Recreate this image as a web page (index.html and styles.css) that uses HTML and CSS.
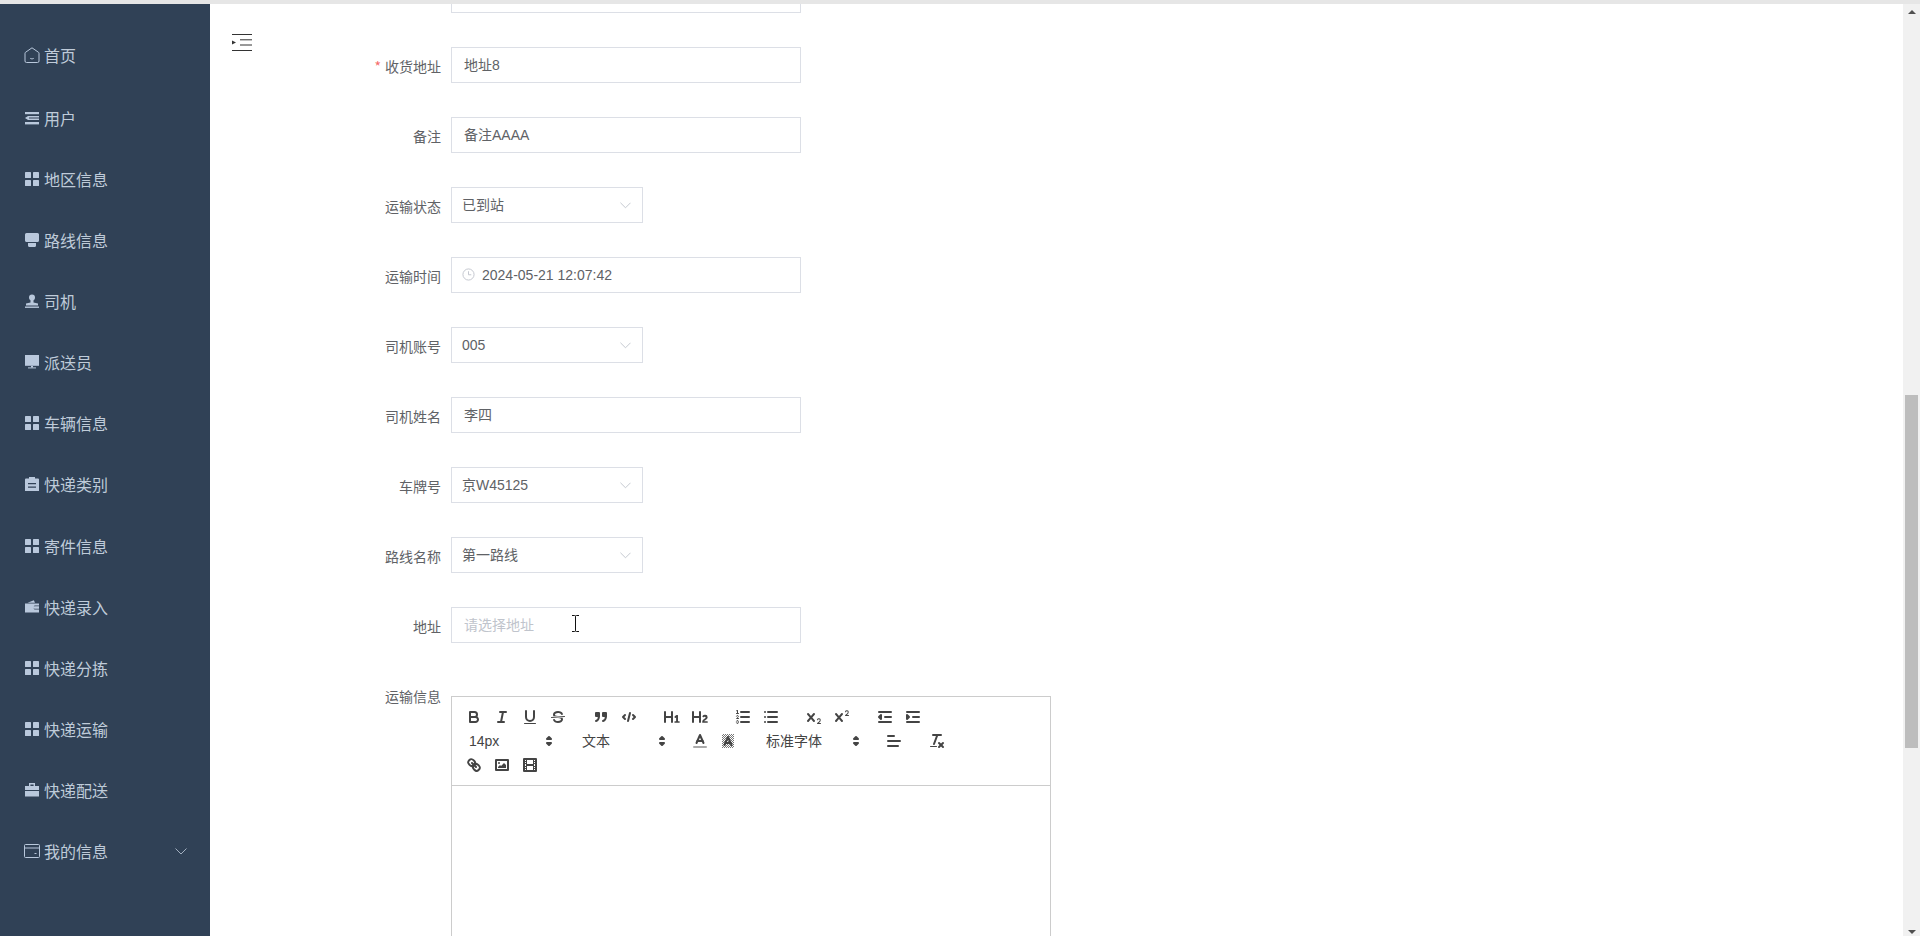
FILE: index.html
```html
<!DOCTYPE html>
<html lang="zh-CN">

<head>
    <meta charset="UTF-8">
    <meta name="viewport" content="width=device-width, initial-scale=1.0">
    <title>快递运输</title>

    <link rel="stylesheet" href="styles.css">

</head>

<body>
    <svg class="defs" width="0" height="0">
        <symbol id="i-menu" viewBox="0 0 14 14">
            <rect x="0" y="0" width="6" height="6" rx="0.6" />
            <rect x="8" y="0" width="6" height="6" rx="0.6" />
            <rect x="0" y="8" width="6" height="6" rx="0.6" />
            <rect x="8" y="8" width="6" height="6" rx="0.6" />
        </symbol>
        <symbol id="i-chevron" viewBox="0 0 12 7">
            <polyline points="0.5 0.5 6 6 11.5 0.5" />
        </symbol>
        <symbol id="i-updown" viewBox="0 0 18 18">
            <polygon class="st" points="7 11 9 13 11 11 7 11" />
            <polygon class="st" points="7 7 9 5 11 7 7 7" />
        </symbol>
    </svg>

    <div class="top-strip"></div>

    <div class="layout">
        <!-- Sidebar -->
        <nav class="sidebar">
            <a class="nav-item nav-home">
                <svg class="nav-icon outline" viewBox="0 0 16 16"><path d="M8 .8 14.6 5.4c.3.2.4.5.4.8V14a1.5 1.5 0 0 1-1.500 1.500h-11A1.500 1.500 0 0 1 1 14V6.200c0-.3.1-.6.4-.8L8 .8Z" /><path d="M6.300 11.400c1 .6 2.400.6 3.400 0" /></svg>
                <span>首页</span>
            </a>
            <a class="nav-item">
                <svg class="nav-icon" viewBox="0 0 14 14"><rect x="0" y="1" width="14" height="2.200" /><path d="M0 7 3 5H14V6.600H4V7.600H14V9H3Z" /><rect x="0" y="11" width="14" height="2.400" /></svg>
                <span>用户</span>
            </a>
            <a class="nav-item">
                <svg class="nav-icon"><use href="#i-menu" /></svg>
                <span>地区信息</span>
            </a>
            <a class="nav-item">
                <svg class="nav-icon" viewBox="0 0 14 14"><path d="M1.500 0H12.500A1.500 1.500 0 0 1 14 1.500V7.500C14 8.500 13 9 12 9H2C1 9 0 8.500 0 7.500V1.500A1.500 1.500 0 0 1 1.500 0Z" /><path d="M3 10H11V12.500C11 13.300 10.500 14 9.500 14H4.500C3.500 14 3 13.300 3 12.500Z" /></svg>
                <span>路线信息</span>
            </a>
            <a class="nav-item">
                <svg class="nav-icon" viewBox="0 0 14 14"><circle cx="7" cy="3.400" r="3" /><path d="M5.500 6H8.500V8.500L13 9.500V11.500H1V9.500L5.500 8.500Z" /><rect x="0" y="12.500" width="14" height="1.400" /></svg>
                <span>司机</span>
            </a>
            <a class="nav-item">
                <svg class="nav-icon" viewBox="0 0 14 14"><rect x="0" y="0" width="14" height="10.800" /><path d="M3 12.400H11V13.400H3Z" /><rect x="6" y="11" width="2" height="1.500" /></svg>
                <span>派送员</span>
            </a>
            <a class="nav-item">
                <svg class="nav-icon"><use href="#i-menu" /></svg>
                <span>车辆信息</span>
            </a>
            <a class="nav-item">
                <svg class="nav-icon" viewBox="0 0 14 14"><path fill-rule="evenodd" d="M4 0H10V1.500H13A1 1 0 0 1 14 2.500V14H0V2.500A1 1 0 0 1 1 1.500H4ZM3 6V7.300H11V6ZM3 9.500V10.800H11V9.500Z" /></svg>
                <span>快递类别</span>
            </a>
            <a class="nav-item">
                <svg class="nav-icon"><use href="#i-menu" /></svg>
                <span>寄件信息</span>
            </a>
            <a class="nav-item">
                <svg class="nav-icon" viewBox="0 0 14 14"><path d="M2.500 2.800 8.800.3 10 2.800Z" /><path fill-rule="evenodd" d="M0 3.500H14V5.500H9.500A2.500 2.500 0 0 0 9.500 9.500H14V12.500H0ZM9.700 6.300H14V8.700H9.700A1.200 1.200 0 0 1 9.700 6.300Z" /></svg>
                <span>快递录入</span>
            </a>
            <a class="nav-item">
                <svg class="nav-icon"><use href="#i-menu" /></svg>
                <span>快递分拣</span>
            </a>
            <a class="nav-item">
                <svg class="nav-icon"><use href="#i-menu" /></svg>
                <span>快递运输</span>
            </a>
            <a class="nav-item">
                <svg class="nav-icon" viewBox="0 0 14 14"><path fill-rule="evenodd" d="M4 0H10V3H14V7H0V3H4ZM5.400 1.400V3H8.600V1.400Z" /><rect x="0" y="8" width="14" height="5.500" /></svg>
                <span>快递配送</span>
            </a>
            <a class="nav-item">
                <svg class="nav-icon outline" viewBox="0 0 16 16"><rect x="0.500" y="1.500" width="15" height="13" rx="1" /><path d="M.5 5H15.500" /><path d="M10.500 10.500H12.500" /></svg>
                <span>我的信息</span>
                <svg class="nav-arrow"><use href="#i-chevron" /></svg>
            </a>
        </nav>

        <!-- Main -->
        <main class="content">
            <svg class="toggle" viewBox="0 0 20 17"><path d="M0 .5H20M8 5.800H20M8 11H20M0 16.500H20" /><polygon points="0 6.500 4 8.500 0 10.500" /></svg>

            <form class="form">
                <div class="form-row">
                    <label class="form-label"></label>
                    <input class="text-input" type="text" readonly>
                </div>
                <div class="form-row">
                    <label class="form-label"><i class="req">*</i>收货地址</label>
                    <input class="text-input" type="text" value="地址8" readonly>
                </div>
                <div class="form-row">
                    <label class="form-label">备注</label>
                    <input class="text-input" type="text" value="备注AAAA" readonly>
                </div>
                <div class="form-row">
                    <label class="form-label">运输状态</label>
                    <div class="select">已到站<svg class="select-arrow"><use href="#i-chevron" /></svg></div>
                </div>
                <div class="form-row">
                    <label class="form-label">运输时间</label>
                    <div class="date-box">
                        <svg class="date-icon" viewBox="0 0 14 14"><circle cx="7" cy="7" r="6" /><path d="M7 3.500V7.300H10" /></svg>
                        <input class="text-input date-input" type="text" value="2024-05-21 12:07:42" readonly>
                    </div>
                </div>
                <div class="form-row">
                    <label class="form-label">司机账号</label>
                    <div class="select">005<svg class="select-arrow"><use href="#i-chevron" /></svg></div>
                </div>
                <div class="form-row">
                    <label class="form-label">司机姓名</label>
                    <input class="text-input" type="text" value="李四" readonly>
                </div>
                <div class="form-row">
                    <label class="form-label">车牌号</label>
                    <div class="select">京W45125<svg class="select-arrow"><use href="#i-chevron" /></svg></div>
                </div>
                <div class="form-row">
                    <label class="form-label">路线名称</label>
                    <div class="select">第一路线<svg class="select-arrow"><use href="#i-chevron" /></svg></div>
                </div>
                <div class="form-row">
                    <label class="form-label">地址</label>
                    <input class="text-input addr-input" type="text" placeholder="请选择地址">
                </div>

                <!-- Rich text editor -->
                <div class="form-row editor-row">
                    <label class="form-label editor-label">运输信息</label>
                    <div class="editor">
                        <div class="toolbar">
                            <div class="tb-row">
                                <span class="tb-group">
                                    <svg class="tb-btn" viewBox="0 0 18 18"><path class="st" d="M5,4H9.500A2.500,2.500,0,0,1,12,6.500v0A2.500,2.500,0,0,1,9.500,9H5A0,0,0,0,1,5,9V4A0,0,0,0,1,5,4Z" /><path class="st" d="M5,9h5.500A2.500,2.500,0,0,1,13,11.500v0A2.500,2.500,0,0,1,10.500,14H5a0,0,0,0,1,0,0V9A0,0,0,0,1,5,9Z" /></svg>
                                    <svg class="tb-btn" viewBox="0 0 18 18"><line class="st" x1="7" x2="13" y1="4" y2="4" /><line class="st" x1="5" x2="11" y1="14" y2="14" /><line class="st" x1="8" x2="10" y1="14" y2="4" /></svg>
                                    <svg class="tb-btn" viewBox="0 0 18 18"><path class="st" d="M5,3V9a4.012,4.012,0,0,0,4,4H9a4.012,4.012,0,0,0,4-4V3" /><rect class="fl" height="1" rx="0.500" ry="0.500" width="12" x="3" y="15" /></svg>
                                    <svg class="tb-btn" viewBox="0 0 18 18"><line class="st th" x1="15.500" x2="2.500" y1="8.500" y2="9.500" /><path class="fl" d="M9.007,8C6.542,7.791,6,7.519,6,6.500,6,5.792,7.283,5,9,5c1.571,0,2.765.679,2.969,1.309a1,1,0,0,0,1.900-.617C13.356,4.106,11.354,3,9,3,6.200,3,4,4.538,4,6.500a3.200,3.200,0,0,0,.5,1.843Z" /><path class="fl" d="M8.984,10C11.457,10.208,12,10.479,12,11.500c0,.708-1.283,1.500-3,1.500-1.571,0-2.765-.679-2.969-1.309a1,1,0,1,0-1.900.617C4.644,13.894,6.646,15,9,15c2.800,0,5-1.538,5-3.500a3.200,3.200,0,0,0-.5-1.843Z" /></svg>
                                </span>
                                <span class="tb-group">
                                    <svg class="tb-btn" viewBox="0 0 18 18"><rect class="st fl" height="3" width="3" x="4" y="5" /><rect class="st fl" height="3" width="3" x="11" y="5" /><path class="st" d="M7,8c0,4.031-3,5-3,5" /><path class="st" d="M14,8c0,4.031-3,5-3,5" /></svg>
                                    <svg class="tb-btn" viewBox="0 0 18 18"><polyline class="st" points="5 7 3 9 5 11" /><polyline class="st" points="13 7 15 9 13 11" /><line class="st" x1="10" x2="8" y1="5" y2="13" /></svg>
                                </span>
                                <span class="tb-group">
                                    <svg class="tb-btn" viewBox="0 0 18 18"><path class="fl" d="M10,4V14a1,1,0,0,1-2,0V10H3v4a1,1,0,0,1-2,0V4A1,1,0,0,1,3,4V8H8V4a1,1,0,0,1,2,0Zm6.068,9.209H14.990V7.599a.541.541,0,0,0-.605-.605h-.627a1.011,1.011,0,0,0-.748.297L11.645,8.566a.544.544,0,0,0-.022.858l.286.308a.539.539,0,0,0,.847.033l.099-.088a1.214,1.214,0,0,0,.242-.353h.022s-.011.309-.011.606V13.209H12.041a.541.541,0,0,0-.605.605v.44a.541.541,0,0,0,.605.605h4.027a.541.541,0,0,0,.605-.605v-.44A.541.541,0,0,0,16.068,13.209Z" /></svg>
                                    <svg class="tb-btn" viewBox="0 0 18 18"><path class="fl" d="M16.740,13.814v.44a.541.541,0,0,1-.605.605H11.855a.584.584,0,0,1-.649-.605v-.241c0-2.905,3.399-3.422,3.399-4.555a.777.777,0,0,0-.847-.781,1.177,1.177,0,0,0-.836.385c-.275.264-.561.374-.858.132l-.429-.341c-.308-.242-.385-.518-.154-.814a2.972,2.972,0,0,1,2.454-1.177,2.454,2.454,0,0,1,2.684,2.409c0,2.453-3.179,2.927-3.278,3.938h2.794A.541.541,0,0,1,16.740,13.814ZM9,3A1,1,0,0,0,8,4V8H3V4A1,1,0,0,0,1,4V14a1,1,0,0,0,2,0V10H8v4a1,1,0,0,0,2,0V4A1,1,0,0,0,9,3Z" /></svg>
                                </span>
                                <span class="tb-group">
                                    <svg class="tb-btn" viewBox="0 0 18 18"><line class="st" x1="7" x2="15" y1="4" y2="4" /><line class="st" x1="7" x2="15" y1="9" y2="9" /><line class="st" x1="7" x2="15" y1="14" y2="14" /><line class="st th" x1="2.500" x2="4.500" y1="5.500" y2="5.500" /><path class="fl" d="M3.500,6A.5.5,0,0,1,3,5.500V3.085l-.276.138A.5.5,0,0,1,2.053,3c-.124-.247-.023-.324.224-.447l1-.5A.5.5,0,0,1,4,2.500v3A.5.5,0,0,1,3.500,6Z" /><path class="st th" d="M4.500,10.500h-2c0-.234,1.850-1.076,1.850-2.234A.959.959,0,0,0,2.500,8.156" /><path class="st th" d="M2.500,14.846a.959.959,0,0,0,1.850-.109A.7.7,0,0,0,3.750,14a.688.688,0,0,0,.6-.736.959.959,0,0,0-1.850-.109" /></svg>
                                    <svg class="tb-btn" viewBox="0 0 18 18"><line class="st" x1="6" x2="15" y1="4" y2="4" /><line class="st" x1="6" x2="15" y1="9" y2="9" /><line class="st" x1="6" x2="15" y1="14" y2="14" /><line class="st" x1="3" x2="3" y1="4" y2="4" /><line class="st" x1="3" x2="3" y1="9" y2="9" /><line class="st" x1="3" x2="3" y1="14" y2="14" /></svg>
                                </span>
                                <span class="tb-group">
                                    <svg class="tb-btn" viewBox="0 0 18 18"><path class="fl" d="M15.500,15H13.861a3.858,3.858,0,0,0,1.914-2.975,1.800,1.800,0,0,0-1.600-1.751A1.921,1.921,0,0,0,12.021,11.700a.5.5,0,1,0,.957.291.914.914,0,0,1,1.053-.725.81.81,0,0,1,.744.762c0,1.076-1.170,1.870-1.940,2.431A1.456,1.456,0,0,0,12,15.500a.5.5,0,0,0,.5.5h3A.5.5,0,0,0,15.500,15Z" /><path class="fl" d="M9.650,5.241a1,1,0,0,0-1.409.108L6,7.964,3.759,5.349A1,1,0,0,0,2.241,6.651L4.684,9.500,2.241,12.350a1,1,0,0,0,1.518,1.301L6,11.036l2.241,2.615a1,1,0,0,0,1.518-1.301L7.316,9.500,9.759,6.651A1,1,0,0,0,9.650,5.241Z" /></svg>
                                    <svg class="tb-btn" viewBox="0 0 18 18"><path class="fl" d="M15.500,7H13.861a4.015,4.015,0,0,0,1.914-2.975,1.800,1.800,0,0,0-1.600-1.751A1.922,1.922,0,0,0,12.021,3.700a.5.5,0,1,0,.957.291.917.917,0,0,1,1.053-.725.81.81,0,0,1,.744.762c0,1.077-1.164,1.925-1.934,2.486A1.423,1.423,0,0,0,12,7.500a.5.5,0,0,0,.5.5h3A.5.5,0,0,0,15.500,7Z" /><path class="fl" d="M9.650,5.241a1,1,0,0,0-1.409.108L6,7.964,3.759,5.349A1,1,0,0,0,2.241,6.651L4.684,9.500,2.241,12.350a1,1,0,0,0,1.518,1.301L6,11.036l2.241,2.615a1,1,0,0,0,1.518-1.301L7.316,9.500,9.759,6.651A1,1,0,0,0,9.650,5.241Z" /></svg>
                                </span>
                                <span class="tb-group">
                                    <svg class="tb-btn" viewBox="0 0 18 18"><line class="st" x1="3" x2="15" y1="14" y2="14" /><line class="st" x1="3" x2="15" y1="4" y2="4" /><line class="st" x1="9" x2="15" y1="9" y2="9" /><polyline class="st fl th2" points="5 7 5 11 3 9 5 7" /></svg>
                                    <svg class="tb-btn" viewBox="0 0 18 18"><line class="st" x1="3" x2="15" y1="14" y2="14" /><line class="st" x1="3" x2="15" y1="4" y2="4" /><line class="st" x1="9" x2="15" y1="9" y2="9" /><polyline class="st fl th2" points="3 7 3 11 5 9 3 7" /></svg>
                                </span>
                            </div>
                            <div class="tb-row">
                                <span class="tb-group">
                                    <span class="picker picker-98">14px<svg class="picker-arrow"><use href="#i-updown" /></svg></span>
                                </span>
                                <span class="tb-group">
                                    <span class="picker picker-98">文本<svg class="picker-arrow"><use href="#i-updown" /></svg></span>
                                </span>
                                <span class="tb-group">
                                    <svg class="tb-btn" viewBox="0 0 18 18"><line class="st lbl" x1="3" x2="15" y1="15" y2="15" /><polyline class="st" points="5.500 11 9 3 12.500 11" /><line class="st" x1="11.630" x2="6.380" y1="9" y2="9" /></svg>
                                    <svg class="tb-btn" viewBox="0 0 18 18"><defs><pattern id="checks" width="2" height="2" patternUnits="userSpaceOnUse"><rect width="1" height="1" fill="#777" /><rect x="1" y="1" width="1" height="1" fill="#777" /></pattern></defs><rect x="3" y="2" width="12" height="14" fill="url(#checks)" /><polyline class="st" points="5.500 13 9 5 12.500 13" /><line class="st" x1="11.630" x2="6.380" y1="11" y2="11" /></svg>
                                </span>
                                <span class="tb-group">
                                    <span class="picker picker-108">标准字体<svg class="picker-arrow"><use href="#i-updown" /></svg></span>
                                </span>
                                <span class="tb-group">
                                    <svg class="tb-btn" viewBox="0 0 18 18"><line class="st" x1="3" x2="15" y1="9" y2="9" /><line class="st" x1="3" x2="13" y1="14" y2="14" /><line class="st" x1="3" x2="9" y1="4" y2="4" /></svg>
                                </span>
                                <span class="tb-group">
                                    <svg class="tb-btn" viewBox="0 0 18 18"><line class="st" x1="5" x2="13" y1="3" y2="3" /><line class="st" x1="6" x2="9.350" y1="12" y2="3" /><line class="st" x1="11" x2="15" y1="11" y2="15" /><line class="st" x1="15" x2="11" y1="11" y2="15" /><rect class="fl" height="1" rx="0.500" ry="0.500" width="7" x="2" y="14" /></svg>
                                </span>
                            </div>
                            <div class="tb-row">
                                <span class="tb-group">
                                    <svg class="tb-btn" viewBox="0 0 18 18"><line class="st" x1="7" x2="11" y1="7" y2="11" /><path class="st" d="M8.900,4.577a3.476,3.476,0,0,1,.36,4.679A3.476,3.476,0,0,1,4.577,8.900C3.185,7.500,2.035,6.400,4.217,4.217S7.500,3.185,8.900,4.577Z" /><path class="st" d="M13.423,9.100a3.476,3.476,0,0,0-4.679-.36,3.476,3.476,0,0,0,.36,4.679c1.392,1.392,2.500,2.542,4.679.36S14.815,10.500,13.423,9.100Z" /></svg>
                                    <svg class="tb-btn" viewBox="0 0 18 18"><rect class="st" height="10" width="12" x="3" y="4" /><circle class="fl" cx="6" cy="7" r="1" /><polyline class="fl" points="5 12 5 11 7 9 8 10 11 7 13 9 13 12 5 12" /></svg>
                                    <svg class="tb-btn" viewBox="0 0 18 18"><rect class="st" height="12" width="12" x="3" y="3" /><rect class="fl" height="12" width="1" x="5" y="3" /><rect class="fl" height="12" width="1" x="12" y="3" /><rect class="fl" height="2" width="8" x="5" y="8" /><rect class="fl" height="1" width="3" x="3" y="5" /><rect class="fl" height="1" width="3" x="3" y="7" /><rect class="fl" height="1" width="3" x="3" y="10" /><rect class="fl" height="1" width="3" x="3" y="12" /><rect class="fl" height="1" width="3" x="12" y="5" /><rect class="fl" height="1" width="3" x="12" y="7" /><rect class="fl" height="1" width="3" x="12" y="10" /><rect class="fl" height="1" width="3" x="12" y="12" /></svg>
                                </span>
                            </div>
                        </div>
                        <div class="editor-body"></div>
                    </div>
                </div>
            </form>

            <!-- text cursor left over the address field -->
            <svg class="ibeam" viewBox="0 0 9 17"><path d="M1 .5H3.500Q4.500 .5 4.500 1.500V15.500Q4.500 16.500 3.500 16.500H1M8 .5H5.500Q4.500 .5 4.500 1.500M4.500 15.500Q4.500 16.500 5.500 16.500H8" /></svg>
        </main>

        <!-- Scrollbar -->
        <div class="scrollbar">
            <span class="sb-up"></span>
            <div class="sb-thumb"></div>
            <span class="sb-down"></span>
        </div>
    </div>
</body>

</html>
```

FILE: styles.css
```css
* {
    box-sizing: border-box;
}

html,
body {
    margin: 0;
    height: 936px;
    overflow: hidden;
}

body {
    font-family: "Liberation Sans", "Noto Sans CJK SC", sans-serif;
    background: #fff;
    display: flex;
    flex-direction: column;
}

.defs {
    position: absolute;
}

.top-strip {
    height: 4px;
    flex-shrink: 0;
    background: #e6e6e6;
}

.layout {
    flex: 1;
    display: flex;
    min-height: 0;
}

/* Sidebar */
.sidebar {
    width: 210px;
    flex-shrink: 0;
    background: #304156;
    padding-top: 21.8px;
}

.nav-item {
    display: flex;
    align-items: center;
    height: 61.17px;
    padding-left: 25px;
    color: #bfcbd9;
    font-size: 16px;
    font-family: "Noto Sans CJK SC", sans-serif;
}

.nav-home {
    padding-bottom: 3px;
}

.nav-icon {
    width: 14px;
    height: 14px;
    margin-right: 5px;
    flex-shrink: 0;
    fill: #b9c8dc;
}

.nav-icon.outline {
    width: 16px;
    height: 16px;
    margin-left: -1px;
    margin-right: 4px;
    fill: none;
    stroke: #b9c8dc;
    stroke-width: 1;
}

.nav-arrow {
    width: 12px;
    height: 7px;
    margin-left: auto;
    margin-right: 23px;
    fill: none;
    stroke: #a3b0c0;
    stroke-width: 1;
}

/* Main */
.content {
    flex: 1;
    min-width: 0;
    position: relative;
    overflow: hidden;
}

.toggle {
    position: absolute;
    left: 22px;
    top: 29.500px;
    width: 20px;
    height: 17px;
    fill: #333;
    stroke: #333;
    stroke-width: 1;
}

.toggle polygon {
    stroke: none;
}

.ibeam {
    position: absolute;
    left: 361px;
    top: 611px;
    width: 9px;
    height: 17px;
    fill: none;
    stroke: #111;
    stroke-width: 1;
}

/* Form */
.form {
    margin: -27px 0 0 111px;
}

.form-row {
    display: flex;
    height: 36px;
    margin-bottom: 34px;
}

.form-label {
    width: 130px;
    padding-right: 10px;
    padding-top: 1px;
    line-height: 36px;
    text-align: right;
    font-size: 14px;
    color: #606266;
    font-family: "Noto Sans CJK SC", sans-serif;
}

.req {
    font-style: normal;
    color: #f56c6c;
    margin-right: 4px;
}

.text-input {
    width: 350px;
    height: 36px;
    padding: 0 12px 2px;
    border: 1px solid #dcdfe6;
    background: #fff;
    color: #606266;
    font-family: "Liberation Sans", "Noto Sans CJK SC", sans-serif;
    font-size: 14px;
    outline: none;
}

.text-input::placeholder {
    color: #c0c4cc;
}

.addr-input {
    padding-bottom: 0;
}

.select {
    position: relative;
    width: 192px;
    height: 36px;
    padding-left: 10px;
    border: 1px solid #dcdfe6;
    line-height: 34px;
    font-size: 14px;
    color: #606266;
}

.select-arrow {
    position: absolute;
    right: 11px;
    top: 14px;
    width: 11px;
    height: 7px;
    fill: none;
    stroke: #c0c4cc;
    stroke-width: 1;
}

.date-box {
    position: relative;
}

.date-input {
    padding: 0 12px 0 30px;
}

.date-icon {
    position: absolute;
    left: 11px;
    top: 11px;
    width: 13px;
    height: 13px;
    fill: none;
    stroke: #c0c4cc;
    stroke-width: 1;
}

/* Editor */
.editor-row {
    height: auto;
    margin-top: 53px;
}

.editor-label {
    line-height: 20px;
    padding-top: 0;
    margin-top: -10px;
}

.editor {
    width: 600px;
    height: 420px;
    border: 1px solid #ccc;
}

.toolbar {
    padding: 8px;
    border-bottom: 1px solid #ccc;
}

.tb-row {
    display: flex;
    height: 24px;
}

.tb-group {
    display: flex;
    margin-right: 15px;
}

.tb-btn {
    width: 28px;
    height: 24px;
    padding: 3px 5px;
}

.st {
    fill: none;
    stroke: #444;
    stroke-width: 2;
    stroke-linecap: round;
    stroke-linejoin: round;
}

.st.th {
    stroke-width: 1;
}

.st.fl,
.fl {
    fill: #444;
}

.st.lbl {
    stroke: #aaa;
}

.picker {
    position: relative;
    display: block;
    height: 24px;
    padding-left: 9px;
    line-height: 24px;
    font-size: 14px;
    color: #444;
    font-family: "Liberation Sans", "Noto Sans CJK SC", sans-serif;
}

.picker-98 {
    width: 98px;
}

.picker-108 {
    width: 108px;
}

.picker-arrow {
    position: absolute;
    right: 0;
    top: 3px;
    width: 18px;
    height: 18px;
}

/* Scrollbar */
.scrollbar {
    width: 17px;
    flex-shrink: 0;
    position: relative;
    background: #f1f1f1;
}

.sb-up,
.sb-down {
    position: absolute;
    left: 5px;
    width: 0;
    height: 0;
    border-left: 4px solid transparent;
    border-right: 4px solid transparent;
}

.sb-up {
    top: 6px;
    border-bottom: 4px solid #505050;
}

.sb-down {
    bottom: 2px;
    border-top: 4px solid #505050;
}

.sb-thumb {
    margin: 391px 2px 0;
    height: 353px;
    background: #bdbdbd;
}
```
